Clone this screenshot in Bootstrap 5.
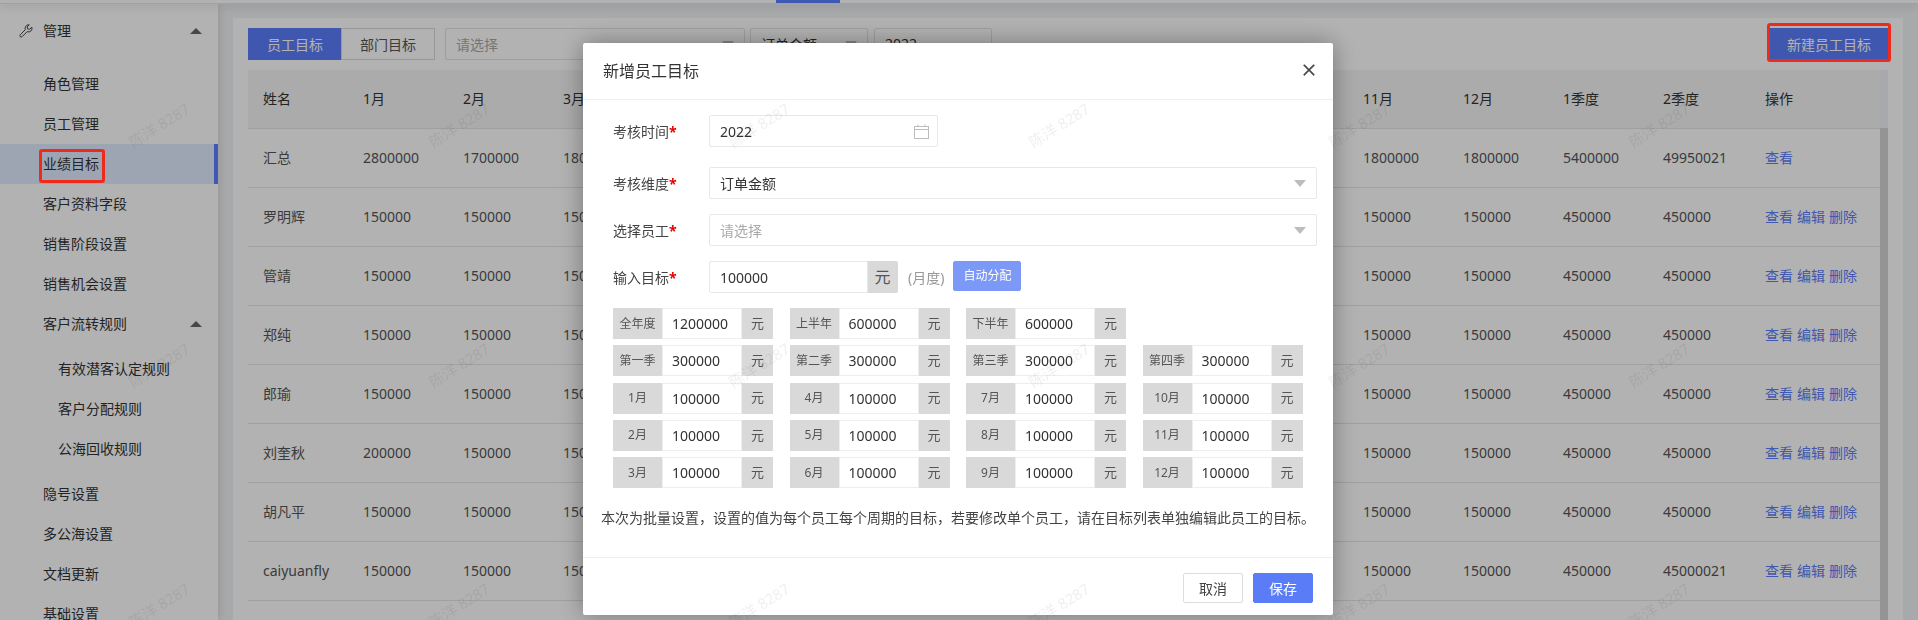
<!DOCTYPE html>
<html lang="zh-CN">
<head>
    <meta charset="UTF-8">
    <title>业绩目标</title>
    <meta name="viewport" content="width=device-width, initial-scale=1">
    <link href="https://cdn.jsdelivr.net/npm/bootstrap@5.3.3/dist/css/bootstrap.min.css" rel="stylesheet">
    <style>
        html, body { height: 620px; overflow: hidden; }
        body { background: #f0f2f5; font-family: "Noto Sans", "Noto Sans CJK SC", sans-serif; font-size: 14px; color: #333; }
        .top-strip { height: 4px; background: #fff; border-bottom: 1px solid #e6e6e6; box-shadow: 0 2px 10px rgba(0,0,0,.14); position: relative; z-index: 2; }
        .top-tab { width: 64px; height: 3px; margin-left: 776px; background: #5b7fff; }
        .side-menu { width: 218px; height: 616px; flex: none; background: #fff; padding-top: 7px; box-shadow: 2px 0 8px rgba(0,0,0,.1); position: relative; z-index: 1; }
        .side-menu .nav-link { height: 40px; padding: 0 16px 0 43px; color: #333; font-size: 14px; line-height: 40px; border-right: 4px solid transparent; }
        .side-menu .nav-link.is-active { background: #e3edff; border-right-color: #5b7fff; }
        .side-menu .nav-link.is-sub { padding-left: 58px; }
        .side-menu .menu-head { padding-left: 19px; margin-bottom: 13px; gap: 10px; }
        .side-menu .menu-group { margin-bottom: 5px; }
        .side-menu .menu-end { margin-bottom: 5px; }
        .tri-up { width: 0; height: 0; margin-left: auto; margin-right: -4px; border-left: 6px solid transparent; border-right: 6px solid transparent; border-bottom: 6px solid #666; }
        .main-wrap { flex: 1; padding: 14px 15px 0; min-width: 0; }
        .goal-panel { background: #fff; padding: 10px 14px 0 15px; height: 610px; }
        .tool-row { height: 32px; margin-bottom: 10px; }
        .tab-btn { width: 94px; height: 32px; padding: 0; font-size: 14px; border-radius: 0 !important; color: #555; background: #fff; border: 1px solid #d9d9d9; }
        .tab-btn.is-on { background: #5b7dfa; border-color: #5b7dfa; color: #fff; }
        .form-select.pick { height: 32px; padding: 0 28px 0 10px; font-size: 14px; color: #333; border-color: #e3e3e3; border-radius: 2px; box-shadow: none;
            background-image: url("data:image/svg+xml,%3Csvg xmlns='http://www.w3.org/2000/svg' viewBox='0 0 12 7'%3E%3Cpath fill='%23bdbdbd' d='M0 0h12L6 7z'/%3E%3C/svg%3E");
            background-size: 12px 7px; background-position: right 10px center; }
        .form-select.pick.is-empty { color: #aaa; }
        .pick-wide { width: 300px; margin-right: 5px; margin-left: 10px; }
        .pick-small { width: 118px; margin-right: 6px; }
        .year-box { width: 118px; height: 32px; border: 1px solid #e3e3e3; border-radius: 2px; padding: 0 10px; line-height: 30px; }
        .new-btn { width: 120px; height: 32px; padding: 0; font-size: 14px; background: #5b7dfa; border-color: #5b7dfa; color: #fff; border-radius: 0; }
        .goal-table { width: 1632px; table-layout: fixed; margin: 0; border-collapse: collapse; font-size: 14px; }
        .goal-table th, .goal-table td { height: 59px; padding: 0 0 0 15px; border-bottom: 1px solid #e5e5e5; vertical-align: middle; white-space: nowrap; overflow: hidden; }
        .goal-table th { height: 58px; background: #f5f5f6; font-weight: 400; color: #333; }
        .goal-table td { color: #555; }
        .goal-table a { color: #5b7dfa; text-decoration: none; margin-right: 4px; }
        .bar-track { width: 8px; flex: none; }
        .bar-top { height: 58px; background: #f1f3f8; }
        .bar-thumb { height: 500px; background: #d4d4d4; }
        .modal-backdrop.soft-back { --bs-backdrop-opacity: .3; }
        .goal-dialog { max-width: none; width: 750px; margin: 43px 0 0 583px; }
        .goal-dialog .modal-content { height: 572px; border: 0; border-radius: 2px; box-shadow: 0 0 24px rgba(0,0,0,.35); }
        .goal-dialog .modal-header { height: 57px; padding: 0 18px 0 20px; border-bottom: 1px solid #eee; border-radius: 0; }
        .goal-dialog .modal-title { font-size: 16px; font-weight: 400; color: #333; }
        .goal-dialog .btn-close { font-size: 14px; padding: 0; margin: -3px -1px 0 0; opacity: .7; }
        .goal-dialog .modal-body { padding: 15px 16px 0 30px; flex: 1; }
        .field-row { height: 32px; margin-bottom: 15px; }
        .field-row.is-first { margin-bottom: 20px; }
        .field-name { width: 96px; flex: none; color: #444; }
        .field-name i { color: #e60000; font-style: normal; font-weight: 700; }
        .form-control.box, .form-select.box { height: 32px; padding: 0 10px; font-size: 14px; color: #333; border-color: #e8e8e8; border-radius: 2px; box-shadow: none; }
        .form-select.box.is-empty { color: #aaa; }
        .date-box { width: 229px; }
        .date-box svg { right: 9px; top: 9px; }
        .amount-box { width: 189px; flex: none; }
        .amount-box .form-control { border-radius: 2px 0 0 2px; }
        .amount-box .input-group-text { width: 31px; padding: 0; justify-content: center; background: #d9d9d9; border-color: #d9d9d9; color: #555; border-radius: 0 2px 2px 0; }
        .unit-note { color: #999; margin: 0 9px 0 10px; }
        .split-btn { width: 68px; height: 30px; padding: 0; margin-top: -2px; font-size: 12px; background: #7c99f8; border-color: #7c99f8; color: #fff; border-radius: 2px; }
        .cell-grid { display: grid; grid-template-columns: repeat(4, 160px); column-gap: 16.5px; row-gap: 6.25px; }
        .goal-cell { height: 31px; flex-wrap: nowrap; }
        .goal-cell > * { margin-left: 0 !important; border-radius: 0 !important; }
        .goal-cell .input-group-text { justify-content: center; padding: 0; background: #d9d9d9; border-color: #d9d9d9; color: #555; }
        .goal-cell .cell-name { width: 49px; flex: none; font-size: 12px; }
        .goal-cell .cell-unit { width: 31px; flex: none; font-size: 13px; }
        .goal-cell .form-control { width: 80px; flex: none; height: 31px; padding: 0 9px; font-size: 14px; color: #333; border-color: #eee; box-shadow: none; }
        .batch-note { margin: 20px 0 0 -12px; line-height: 20px; font-size: 14px; color: #444; white-space: nowrap; }
        .goal-dialog .modal-footer { height: 58px; padding: 15px 20px 0 0; align-items: flex-start; border-top: 1px solid #eee; border-radius: 0; gap: 10px; }
        .goal-dialog .modal-footer > * { margin: 0; }
        .foot-btn { width: 60px; height: 30px; padding: 0; font-size: 14px; border-radius: 2px; }
        .foot-cancel { background: #fff; border-color: #ddd; color: #444; }
        .foot-save { background: #5b7cf7; border-color: #5b7cf7; color: #fff; }
        .mark-box { position: absolute; z-index: 1070; border: 3px solid #ee2a1e; border-radius: 3px; pointer-events: none; }
        .mark-side { left: 39px; top: 149px; width: 66px; height: 34px; }
        .mark-new { left: 1767px; top: 23px; width: 124px; height: 39px; }
        .stamp-layer { position: absolute; z-index: 1065; left: 9px; top: 5px; height: 615px; overflow: hidden; display: grid; grid-template-columns: repeat(6, 300px); grid-auto-rows: 240px; pointer-events: none; }
        .stamp-layer span { align-self: center; justify-self: center; transform: rotate(-32deg); font-size: 15px; color: rgba(0,0,0,.065); white-space: nowrap; }
    </style>
</head>
<body>

<div class="top-strip"><div class="top-tab"></div></div>

<div class="d-flex">
    <nav class="side-menu nav flex-column flex-nowrap">
        <a class="nav-link menu-head d-flex align-items-center" href="#">
            <svg width="14" height="14" viewBox="0 0 14 14" fill="none" stroke="#444" stroke-width="1"><path d="M9.5 .8a3.6 3.6 0 0 0-3.2 4.9L1.2 10.8a1.3 1.3 0 0 0 0 1.8l.1.1a1.3 1.3 0 0 0 1.8 0l5-5a3.6 3.6 0 0 0 4.7-4.6l-2.2 2.2-2-.5-.5-2 2.2-2a3.6 3.6 0 0 0-.8 0z"/></svg>
            <span>管理</span><span class="tri-up"></span>
        </a>
        <a class="nav-link" href="#">角色管理</a>
        <a class="nav-link" href="#">员工管理</a>
        <a class="nav-link is-active" href="#">业绩目标</a>
        <a class="nav-link" href="#">客户资料字段</a>
        <a class="nav-link" href="#">销售阶段设置</a>
        <a class="nav-link" href="#">销售机会设置</a>
        <a class="nav-link menu-group d-flex align-items-center" href="#"><span>客户流转规则</span><span class="tri-up"></span></a>
        <a class="nav-link is-sub" href="#">有效潜客认定规则</a>
        <a class="nav-link is-sub" href="#">客户分配规则</a>
        <a class="nav-link is-sub menu-end" href="#">公海回收规则</a>
        <a class="nav-link" href="#">隐号设置</a>
        <a class="nav-link" href="#">多公海设置</a>
        <a class="nav-link" href="#">文档更新</a>
        <a class="nav-link" href="#">基础设置</a>
    </nav>

    <main class="main-wrap">
        <div class="goal-panel">
            <div class="tool-row d-flex align-items-center">
                <div class="btn-group">
                    <button type="button" class="btn tab-btn is-on">员工目标</button>
                    <button type="button" class="btn tab-btn">部门目标</button>
                </div>
                <select class="form-select pick pick-wide is-empty"><option>请选择</option></select>
                <select class="form-select pick pick-small"><option>订单金额</option></select>
                <div class="year-box">2022</div>
                <button type="button" class="btn new-btn ms-auto">新建员工目标</button>
            </div>
            <div class="d-flex align-items-start">
                <table class="table goal-table">
                    <colgroup id="goalCols"></colgroup>
                    <thead><tr id="goalHead"></tr></thead>
                    <tbody id="goalBody"></tbody>
                </table>
                <div class="bar-track">
                    <div class="bar-top"></div>
                    <div class="bar-thumb"></div>
                </div>
            </div>
        </div>
    </main>
</div>

<div class="modal-backdrop soft-back show"></div>

<div class="modal d-block" tabindex="-1">
    <div class="modal-dialog goal-dialog">
        <div class="modal-content">
            <div class="modal-header">
                <h5 class="modal-title">新增员工目标</h5>
                <button type="button" class="btn-close" aria-label="Close"></button>
            </div>
            <div class="modal-body">
                <div class="field-row is-first d-flex align-items-center">
                    <div class="field-name">考核时间<i>*</i></div>
                    <div class="date-box position-relative">
                        <input class="form-control box" type="text" value="2022">
                        <svg class="position-absolute" width="15" height="15" viewBox="0 0 15 15" fill="none" stroke="#bdbdbd" stroke-width="1"><rect x=".5" y="2.5" width="14" height="12"/><path d="M.5 5.5h14M4 .5v2M11 .5v2"/></svg>
                    </div>
                </div>
                <div class="field-row d-flex align-items-center">
                    <div class="field-name">考核维度<i>*</i></div>
                    <select class="form-select pick box flex-fill"><option>订单金额</option></select>
                </div>
                <div class="field-row d-flex align-items-center">
                    <div class="field-name">选择员工<i>*</i></div>
                    <select class="form-select pick box is-empty flex-fill"><option>请选择</option></select>
                </div>
                <div class="field-row d-flex align-items-center">
                    <div class="field-name">输入目标<i>*</i></div>
                    <div class="input-group amount-box flex-nowrap">
                        <input class="form-control box" type="text" value="100000">
                        <span class="input-group-text">元</span>
                    </div>
                    <span class="unit-note">(月度)</span>
                    <button type="button" class="btn split-btn">自动分配</button>
                </div>
                <div class="cell-grid" id="cellGrid"></div>
                <p class="batch-note">本次为批量设置，设置的值为每个员工每个周期的目标，若要修改单个员工，请在目标列表单独编辑此员工的目标。</p>
            </div>
            <div class="modal-footer">
                <button type="button" class="btn foot-btn foot-cancel">取消</button>
                <button type="button" class="btn foot-btn foot-save">保存</button>
            </div>
        </div>
    </div>
</div>

<div class="stamp-layer" id="stampLayer"></div>
<div class="mark-box mark-side"></div>
<div class="mark-box mark-new"></div>

<script src="https://cdn.jsdelivr.net/npm/bootstrap@5.3.3/dist/js/bootstrap.bundle.min.js"></script>
<script>
    const heads = ["姓名","1月","2月","3月","4月","5月","6月","7月","8月","9月","10月","11月","12月","1季度","2季度","操作"];
    const widths = heads.map((h, i) => i === 15 ? 130 : i === 14 ? 102 : 100);
    document.getElementById("goalCols").innerHTML = widths.map(w => `<col style="width:${w}px">`).join("");
    document.getElementById("goalHead").innerHTML = heads.map(h => `<th>${h}</th>`).join("");

    const rows = [
        { name: "汇总", m1: 2800000, m2: 1700000, m: 1800000, q1: 5400000, q2: 49950021, total: true },
        { name: "罗明辉", m1: 150000 },
        { name: "管靖", m1: 150000 },
        { name: "郑纯", m1: 150000 },
        { name: "郎瑜", m1: 150000 },
        { name: "刘奎秋", m1: 200000 },
        { name: "胡凡平", m1: 150000 },
        { name: "caiyuanfly", m1: 150000, q2: 45000021 }
    ];
    document.getElementById("goalBody").innerHTML = rows.map(r => {
        const m = r.m || 150000;
        const months = Array.from({ length: 12 }, (_, i) => i === 0 ? r.m1 : i === 1 ? (r.m2 || m) : m);
        const links = r.total ? `<a href="#">查看</a>` : `<a href="#">查看</a><a href="#">编辑</a><a href="#">删除</a>`;
        return `<tr><td>${r.name}</td>${months.map(v => `<td>${v}</td>`).join("")}<td>${r.q1 || 450000}</td><td>${r.q2 || 450000}</td><td>${links}</td></tr>`;
    }).join("");

    const cells = [
        ["全年度", 1200000], ["上半年", 600000], ["下半年", 600000], null,
        ["第一季", 300000], ["第二季", 300000], ["第三季", 300000], ["第四季", 300000],
        ["1月", 100000], ["4月", 100000], ["7月", 100000], ["10月", 100000],
        ["2月", 100000], ["5月", 100000], ["8月", 100000], ["11月", 100000],
        ["3月", 100000], ["6月", 100000], ["9月", 100000], ["12月", 100000]
    ];
    document.getElementById("cellGrid").innerHTML = cells.map(c => c ? `
        <div class="input-group goal-cell">
            <span class="input-group-text cell-name">${c[0]}</span>
            <input class="form-control" type="text" value="${c[1]}">
            <span class="input-group-text cell-unit">元</span>
        </div>` : "<div></div>").join("");

    // watermark repeats across the whole page
    document.getElementById("stampLayer").innerHTML = "<span>陈洋 8287</span>".repeat(18);
</script>
</body>
</html>
